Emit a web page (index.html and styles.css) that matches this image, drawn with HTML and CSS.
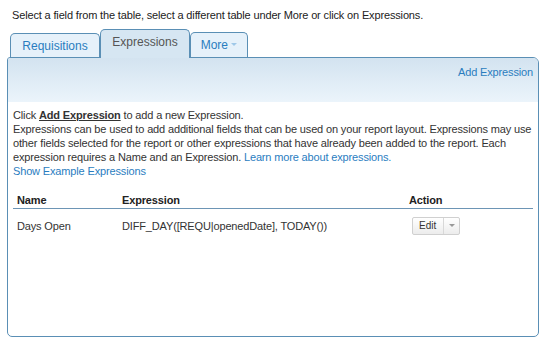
FILE: index.html
```html
<!DOCTYPE html>
<html>
<head>
<meta charset="utf-8">
<link rel="stylesheet" href="styles.css">
</head>
<body>
<div class="intro">Select a field from the table, select a different table under More or click on Expressions.</div>
<div class="tabs">
  <div class="tab">Requisitions</div>
  <div class="tab active">Expressions</div>
  <div class="tab more">More <span class="caret"></span></div>
</div>
<div class="panel">
  <div class="band"><a class="link">Add Expression</a></div>
  <div class="body">
    <p class="desc">Click <b class="u">Add Expression</b> to add a new Expression.<br>Expressions can be used to add additional fields that can be used on your report layout. Expressions may use other fields selected for the report or other expressions that have already been added to the report. Each expression requires a Name and an Expression. <a class="link">Learn more about expressions.</a><br><a class="link">Show Example Expressions</a></p>
    <table class="grid">
      <thead>
        <tr><th class="c-name">Name</th><th class="c-expr">Expression</th><th class="c-act">Action</th></tr>
      </thead>
      <tbody>
        <tr><td>Days Open</td><td>DIFF_DAY([REQU|openedDate], TODAY())</td><td class="act"><span class="btn"><span class="btn-main">Edit</span><span class="btn-drop"><span class="caret grey"></span></span></span></td></tr>
      </tbody>
    </table>
  </div>
</div>
</body>
</html>
```
FILE: styles.css
```css
html, body { margin: 0; padding: 0; background: #fff; }
body { font-family: "Liberation Sans", Arial, sans-serif; font-size: 11px; letter-spacing: -0.15px; color: #333; }
.intro { padding: 8px 0 0 12px; line-height: 14px; height: 14px; color: #222; }
.tabs { display: flex; align-items: flex-end; margin: 6px 0 0 10px; height: 29px; letter-spacing: 0; }
.tab { box-sizing: border-box; height: 24px; border: 1px solid #5a8fb5; border-bottom: none; border-radius: 5px 5px 0 0; background: #e6f1fa; color: #2a7dbf; font-size: 12px; line-height: 24px; text-align: center; width: 90px; margin-right: 0; }
.tab.active { height: 29px; background: #d6e6f2; color: #555; line-height: 25px; position: relative; top: 1px; margin-top: -1px; }
.tab.more { width: 58px; height: 25px; line-height: 25px; }
.caret { display: inline-block; width: 0; height: 0; border-left: 3px solid transparent; border-right: 3px solid transparent; border-top: 3px solid #9fc8e8; vertical-align: middle; margin-top: -2px; }
.caret.grey { border-top-color: #999; }
.panel { box-sizing: border-box; margin: 0 8px 0 7px; height: 280px; border: 1px solid #5a8fb5; border-radius: 3px 6px 5px 5px; overflow: hidden; }
.band { height: 44px; background: linear-gradient(#d3e3f0, #ebf4fb); text-align: right; padding: 7px 5px 0 0; box-sizing: border-box; line-height: 14px; }
.link { color: #2a7dbf; text-decoration: none; }
.body { padding: 6px 5px 0 5px; }
.desc { margin: 0; line-height: 14px; }
.u { text-decoration: underline; }
.grid { width: 100%; border-collapse: collapse; margin-top: 14px; }
.grid th { text-align: left; font-weight: bold; color: #222; padding: 1px 4px 1px 4px; line-height: 14px; height: 14px; border-bottom: 1px solid #6d95b5; }
.c-name { width: 97px; }
.c-expr { width: 279px; }
.grid td { padding: 9px 4px 9px 4px; line-height: 14px; }
.grid td.act { padding-top: 8px; padding-bottom: 8px; padding-left: 7px; }
.btn { display: inline-flex; height: 18px; box-sizing: border-box; border: 1px solid #d0d0d0; border-radius: 2px; background: linear-gradient(#ffffff, #ececec); font-size: 10px; line-height: 16px; color: #333; vertical-align: middle; letter-spacing: 0; }
.btn-main { padding: 0 7px 0 6px; border-right: 1px solid #d8d8d8; }
.btn-drop { width: 15px; text-align: center; }
```
